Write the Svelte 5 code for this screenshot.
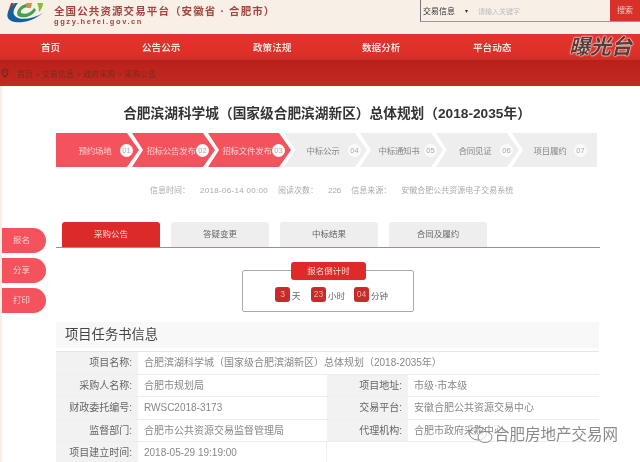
<script>
  const nav = ['首页', '公告公示', '政策法规', '数据分析', '平台动态'];
  const crumbs = '首页 > 交易信息 > 政府采购 > 采购公告';

  const steps = [
    { name: '预约场地', done: true },
    { name: '招标公告发布', done: true },
    { name: '招标文件发布', done: true },
    { name: '中标公示' },
    { name: '中标通知书' },
    { name: '合同见证' },
    { name: '项目履约' }
  ];

  const tabs = ['采购公告', '答疑变更', '中标结果', '合同及履约'];
  const side = ['报名', '分享', '打印'];
  const countdown = [
    { n: '3', unit: '天' },
    { n: '23', unit: '小时' },
    { n: '04', unit: '分钟' }
  ];

  const rows = [
    [['项目名称:', '合肥滨湖科学城（国家级合肥滨湖新区）总体规划（2018-2035年）']],
    [['采购人名称:', '合肥市规划局'], ['项目地址:', '市级·市本级']],
    [['财政委托编号:', 'RWSC2018-3173'], ['交易平台:', '安徽合肥公共资源交易中心']],
    [['监督部门:', '合肥市公共资源交易监督管理局'], ['代理机构:', '合肥市政府采购中心']],
    [['项目建立时间:', '2018-05-29 19:19:00']]
  ];
</script>

<div class="page">
  <header class="top">
    <div class="brand">
      <svg class="logo" viewBox="0 0 46 26" width="46" height="26">
        <path d="M8 12 L11 3 L14 3 L11 10 Z" fill="#b5342c" />
        <path d="M15 3 C9 8 6 14 8 18 C11 24 28 25 43 13 C33 19 20 21 15 16 C12 13 14 8 18 3 Z" fill="#14609f" />
        <path d="M18 16 C15 12 20 5 26 4 L29 7 C24 7 20 10 21 13 C25 15 31 13 34 8 L36 10 C32 17 23 19 18 16 Z" fill="#3fa34a" />
        <path d="M26 3 H32 L31 8 H27 Z" fill="#d9904a" />
        <path d="M37 3 H43 C43 7 41 10 39 12 C39 8 38 5 37 3 Z" fill="#8bbb3a" />
      </svg>
      <div>
        <div class="brand-name">全国公共资源交易平台（安徽省 · 合肥市）</div>
        <div class="brand-url">ggzy.hefei.gov.cn</div>
      </div>
    </div>
    <div class="search">
      <span class="search-type">交易信息</span>
      <span class="caret">▾</span>
      <span class="search-input">请输入关键字</span>
      <span class="search-btn">搜索</span>
    </div>
  </header>

  <nav class="nav">
    {#each nav as item}
      <span>{item}</span>
    {/each}
    <span class="slogan">曝光台</span>
  </nav>

  <div class="crumbs">
    <svg viewBox="0 0 10 12" width="8" height="10">
      <path d="M5 1 C2.8 1 1.2 2.7 1.2 4.7 C1.2 7.3 5 11 5 11 C5 11 8.8 7.3 8.8 4.7 C8.8 2.7 7.2 1 5 1 Z" fill="none" stroke="#6e2a22" stroke-width="1.4" />
      <circle cx="5" cy="4.6" r="1.2" fill="#6e2a22" />
    </svg>
    <span>{crumbs}</span>
  </div>

  <main class="content">
    <h1>合肥滨湖科学城（国家级合肥滨湖新区）总体规划（2018-2035年）</h1>

    <ol class="steps">
      {#each steps as step, i}
        <li class="step" class:done={step.done} class:first={i === 0}>
          <span class="step-name">{step.name}</span>
          <span class="step-no">0{i + 1}</span>
        </li>
      {/each}
    </ol>

    <div class="meta">
      <span>信息时间：</span><span class="date">2018-06-14 00:00</span>
      <span>阅读次数：</span><span>226</span>
      <span>信息来源：</span><span>安徽合肥公共资源电子交易系统</span>
    </div>

    <div class="tabs">
      {#each tabs as tab, i}
        <span class="tab" class:active={i === 0}>{tab}</span>
      {/each}
    </div>

    <div class="count-wrap">
      <div class="count">
        <div class="count-title">报名倒计时</div>
        <div class="count-items">
          {#each countdown as c}
            <span class="count-item"><b>{c.n}</b>{c.unit}</span>
          {/each}
        </div>
      </div>
    </div>

    <h2>项目任务书信息</h2>

    <div class="table">
      {#each rows as row}
        <div class="row">
          {#each row as cell, i}
            <div class="label" class:second={i === 1}>{cell[0]}</div>
            <div class="value" class:wide={rows[0] === row} class:half={row.length === 1 && rows[0] !== row}>{cell[1]}</div>
          {/each}
        </div>
      {/each}
    </div>
  </main>

  <aside class="side">
    {#each side as s}
      <span>{s}</span>
    {/each}
  </aside>

  <div class="watermark">
    <svg viewBox="0 0 26 20" width="26" height="20">
      <ellipse cx="10" cy="8.5" rx="8.5" ry="6.5" fill="none" stroke="#888" stroke-width="1" />
      <ellipse cx="17" cy="12" rx="7" ry="5.5" fill="rgba(255,255,255,.7)" stroke="#888" stroke-width="1" />
      <circle cx="7" cy="7" r="1" fill="#888" />
      <circle cx="12" cy="7" r="1" fill="#888" />
    </svg>
    <span>合肥房地产交易网</span>
  </div>
</div>

<style>
  :global(body) {
    margin: 0;
    background: #fff;
  }

  .page {
    position: relative;
    width: 640px;
    height: 462px;
    overflow: hidden;
    font-family: "Liberation Sans", "Noto Sans CJK SC", sans-serif;
    background: #f7efe6;
    filter: blur(0.4px);
  }

  .top {
    height: 34px;
    display: flex;
    justify-content: space-between;
    background: #f8f0e7;
  }

  .brand {
    display: flex;
    gap: 8px;
  }

  .logo {
    flex: none;
  }

  .brand-name {
    margin-top: 5px;
    font-size: 10.5px;
    line-height: 13px;
    font-weight: 700;
    color: #a5433f;
    letter-spacing: 1.1px;
    white-space: nowrap;
  }

  .brand-url {
    font-size: 7.5px;
    line-height: 8px;
    font-weight: 700;
    color: #a5433f;
    letter-spacing: 1.6px;
  }

  .search {
    width: 219px;
    height: 21px;
    display: flex;
    align-items: center;
    border-left: 1px solid #777;
    border-bottom: 1px solid #999;
    font-size: 8px;
    color: #333;
  }

  .search-type {
    margin-left: 2px;
  }

  .caret {
    margin-left: 10px;
    font-size: 6px;
  }

  .search-input {
    margin-left: 10px;
    color: #bbb;
    font-size: 7px;
  }

  .search-btn {
    margin-left: auto;
    width: 30px;
    height: 21px;
    line-height: 21px;
    text-align: center;
    background: #d9302a;
    color: #f0c9c0;
    font-size: 8px;
  }

  .nav {
    height: 26px;
    padding-left: 41px;
    display: flex;
    align-items: center;
    background: linear-gradient(#e2342e 0%, #e02f29 75%, #c9302a 100%);
    color: #f6e1d8;
    font-size: 9.6px;
    font-weight: 700;
    text-shadow: 0 0 1px #a02020;
  }

  .nav span {
    flex: none;
    white-space: nowrap;
  }

  .nav span:nth-child(1) { width: 101px; }
  .nav span:nth-child(2) { width: 111px; }
  .nav span:nth-child(3) { width: 109px; }
  .nav span:nth-child(4) { width: 111px; }
  .nav span:nth-child(5) { width: 96px; }

  .nav .slogan {
    width: 68px;
    font-size: 21px;
    line-height: 24px;
    font-style: italic;
    font-weight: 700;
    color: #5a3a34;
    text-shadow: 0 0 2px #fff, 0 0 1px #fff, 0 0 1px #fff;
  }

  .crumbs {
    height: 26px;
    padding-left: 1px;
    display: flex;
    align-items: center;
    gap: 8px;
    background: linear-gradient(#b92019, #c32b22);
    color: #7a2a22;
    font-size: 8px;
  }

  .content {
    margin-left: 2px;
    height: 376px;
    background: #fff;
    padding-top: 1px;
  }

  h1 {
    margin: 17px 0 0;
    padding-left: 12px;
    text-align: center;
    font-size: 13.7px;
    line-height: 20px;
    font-weight: 700;
    color: #333;
  }

  .steps {
    list-style: none;
    margin: 9px 0 0 54px;
    padding: 0;
    display: flex;
    height: 34px;
  }

  .step {
    width: 87px;
    margin-right: -11px;
    box-sizing: border-box;
    padding: 0 10px 0 14px;
    flex: none;
    display: flex;
    align-items: center;
    justify-content: space-between;
    background: #eeeeee;
    color: #888;
    font-size: 8.5px;
    clip-path: polygon(0 0, 71px 0, 83px 50%, 71px 100%, 0 100%, 11px 50%);
  }

  .step.first {
    clip-path: polygon(0 0, 71px 0, 83px 50%, 71px 100%, 0 100%);
  }

  .step:last-child {
    width: 85px;
    clip-path: polygon(0 0, 100% 0, 100% 100%, 0 100%, 11px 50%);
  }

  .step.done {
    background: #f4525d;
    color: #f9d0d0;
  }

  .step-name {
    flex: 1;
    text-align: center;
    white-space: nowrap;
    letter-spacing: -0.3px;
  }

  .step-no {
    flex: none;
    width: 13px;
    height: 13px;
    line-height: 13px;
    border-radius: 50%;
    text-align: center;
    background: #fafafa;
    color: #aaa;
    font-size: 7.5px;
  }

  .meta {
    margin: 17px 0 0 148px;
    display: flex;
    gap: 10px;
    height: 14px;
    line-height: 14px;
    font-size: 8px;
    color: #aaa;
  }

  .date {
    letter-spacing: 0.3px;
  }

  .tabs {
    margin: 24px 0 0 54px;
    width: 544px;
    height: 26px;
    padding-left: 6px;
    box-sizing: border-box;
    display: flex;
    gap: 11px;
    border-bottom: 1px solid #a98a8a;
  }

  .tab {
    width: 98px;
    line-height: 25px;
    text-align: center;
    background: #eeeeee;
    border-radius: 3px 3px 0 0;
    color: #666;
    font-size: 8.5px;
  }

  .tab.active {
    background: #dc2a28;
    color: #f5d5cf;
  }

  .count-wrap {
    display: flex;
    margin: 22px 0 0 240px;
    height: 41px;
  }

  .count {
    position: relative;
    width: 170px;
    height: 40px;
    border: 1px solid #aaa;
    border-radius: 2px;
  }

  .count-title {
    position: absolute;
    left: 48px;
    top: -9px;
    width: 75px;
    height: 18px;
    line-height: 18px;
    text-align: center;
    border-radius: 3px;
    background: #de2b2a;
    color: #f7d8d0;
    font-size: 8.5px;
  }

  .count-items {
    display: flex;
    margin: 16px 0 0 32px;
    font-size: 8.5px;
    color: #666;
  }

  .count-item {
    display: flex;
    align-items: center;
    gap: 2px;
  }

  .count-item:nth-child(1) { width: 36px; }
  .count-item:nth-child(2) { width: 43px; }

  .count-item b {
    width: 15px;
    height: 15px;
    line-height: 15px;
    text-align: center;
    border-radius: 3px;
    background: #c92a2a;
    color: #eeb0a8;
    font-weight: 400;
    font-size: 8.5px;
  }

  h2 {
    margin: 11px 0 0 54px;
    width: 543px;
    height: 26px;
    line-height: 26px;
    padding-left: 9px;
    box-sizing: border-box;
    background: #f8f8f8;
    font-size: 13.3px;
    font-weight: 400;
    color: #444;
  }

  .table {
    margin: 3px 0 0 54px;
    width: 543px;
    border-top: 1px solid #e6e6e6;
  }

  .row {
    display: flex;
    height: 21.5px;
    border-bottom: 1px solid #eee;
    font-size: 10px;
    line-height: 21.5px;
    color: #888;
  }

  .label {
    flex: none;
    width: 82px;
    padding-right: 6px;
    box-sizing: border-box;
    text-align: right;
    background: #f2f2f2;
    color: #666;
    white-space: nowrap;
  }

  .label.second {
    width: 81px;
  }

  .value {
    flex: none;
    width: 189px;
    padding-left: 6px;
    box-sizing: border-box;
    white-space: nowrap;
  }

  .value.wide {
    width: 461px;
  }

  .value.half {
    border-right: 1px solid #eee;
  }

  .row:nth-child(n+2):nth-child(-n+4) .value:last-child {
    width: 190px;
  }

  .side {
    position: absolute;
    left: 2px;
    top: 228px;
    display: flex;
    flex-direction: column;
    gap: 5px;
  }

  .side span {
    width: 44px;
    height: 25px;
    line-height: 25px;
    padding-right: 5px;
    box-sizing: border-box;
    text-align: center;
    background: #f4525d;
    border-radius: 0 13px 13px 0;
    color: #f8cfd0;
    font-size: 8.5px;
  }

  .watermark {
    position: absolute;
    left: 468px;
    top: 425px;
    display: flex;
    align-items: center;
    color: #8a8a8a;
    font-size: 15.5px;
    line-height: 20px;
    white-space: nowrap;
    text-shadow: 0 0 2px #fff, 0 0 2px #fff;
  }
</style>
